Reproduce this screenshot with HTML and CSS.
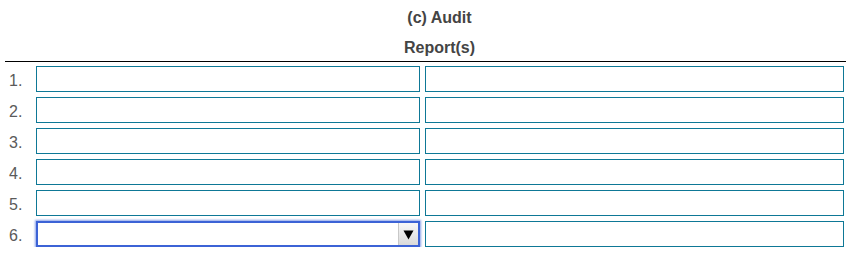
FILE: index.html
```html
<!DOCTYPE html>
<html>
<head>
<meta charset="utf-8">
<link rel="stylesheet" href="styles.css">
</head>
<body>
<div class="form">
  <div class="heading h1">(c) Audit</div>
  <div class="heading h2">Report(s)</div>
  <div class="rows">
    <div class="num">1.</div><input class="field" type="text"><input class="field" type="text">
    <div class="num">2.</div><input class="field" type="text"><input class="field" type="text">
    <div class="num">3.</div><input class="field" type="text"><input class="field" type="text">
    <div class="num">4.</div><input class="field" type="text"><input class="field" type="text">
    <div class="num">5.</div><input class="field" type="text"><input class="field" type="text">
    <div class="num">6.</div>
    <div class="select-wrap">
      <select class="select"><option></option></select>
      <span class="select-btn"><svg width="11" height="11" viewBox="0 0 11 11"><path d="M0.5 1.5 L10.5 1.5 L5.5 10.5 Z" fill="#000"/></svg></span>
    </div>
    <input class="field" type="text">
  </div>
</div>
</body>
</html>
```
FILE: styles.css
```css
html, body {
  margin: 0;
  padding: 0;
  background: #fff;
}
body {
  font-family: "Liberation Sans", Arial, sans-serif;
  color: #444;
}
.form {
  width: 841px;
  margin-left: 5px;
  padding-top: 9px;
}
.heading {
  font-size: 16px;
  font-weight: bold;
  line-height: 18px;
  text-align: center;
  padding-left: 28px;
  color: #444;
}
.h2 {
  margin-top: 12px;
  padding-bottom: 4px;
  border-bottom: 1px solid #000;
}
.rows {
  display: grid;
  grid-template-columns: 26px 384px 419px;
  column-gap: 5px;
  row-gap: 5px;
  padding-top: 4px;
}
.num {
  font-size: 16px;
  line-height: 26px;
  padding-top: 2px;
  padding-left: 4px;
  height: 24px;
  color: #5a5a5a;
}
.field {
  box-sizing: border-box;
  height: 26px;
  width: 100%;
  margin: 0;
  border: 1px solid #0e7896;
  background: #fff;
  padding: 0 4px;
  font: 14px "Liberation Sans", Arial, sans-serif;
  outline: none;
}
.select-wrap {
  position: relative;
  height: 26px;
}
.select {
  box-sizing: border-box;
  width: 100%;
  height: 26px;
  margin: 0;
  -webkit-appearance: none;
  appearance: none;
  border: 2px solid #3c63d6;
  border-radius: 0;
  background: #fff;
  box-shadow: 0 0 2px 1px #8aa2ea;
  outline: none;
  font: 14px "Liberation Sans", Arial, sans-serif;
}
.select-btn {
  position: absolute;
  right: 2px;
  top: 2px;
  width: 20px;
  height: 22px;
  box-sizing: border-box;
  border-left: 1px solid #c8c8c8;
  background: linear-gradient(#f8f8f8, #dadada);
  display: flex;
  align-items: center;
  justify-content: center;
  pointer-events: none;
}
```
